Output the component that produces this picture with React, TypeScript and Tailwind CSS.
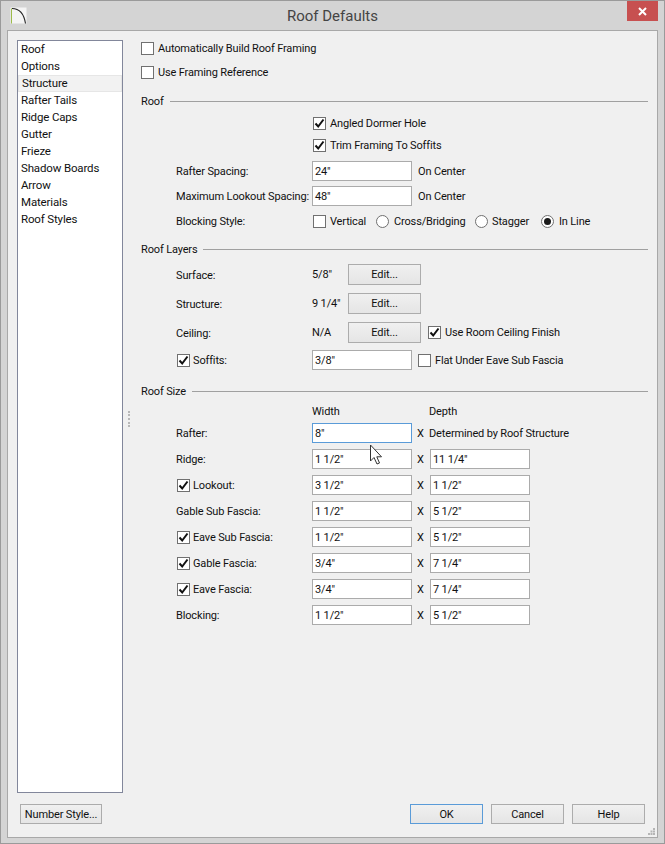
import type { ReactNode } from "react";

const menuItems = [
  "Roof",
  "Options",
  "Structure",
  "Rafter Tails",
  "Ridge Caps",
  "Gutter",
  "Frieze",
  "Shadow Boards",
  "Arrow",
  "Materials",
  "Roof Styles",
];

const sizeRows = [
  { label: "Ridge:", width: '1 1/2"', depth: '11 1/4"' },
  { label: "Lookout:", width: '3 1/2"', depth: '1 1/2"', check: true },
  { label: "Gable Sub Fascia:", width: '1 1/2"', depth: '5 1/2"' },
  { label: "Eave Sub Fascia:", width: '1 1/2"', depth: '5 1/2"', check: true },
  { label: "Gable Fascia:", width: '3/4"', depth: '7 1/4"', check: true },
  { label: "Eave Fascia:", width: '3/4"', depth: '7 1/4"', check: true },
  { label: "Blocking:", width: '1 1/2"', depth: '5 1/2"' },
];

const Checkbox = ({ checked = false, className = "" }: { checked?: boolean; className?: string }) => (
  <span
    className={`flex h-[13px] w-[13px] shrink-0 items-center justify-center border border-[#707070] bg-white ${className}`}
  >
    {checked && (
      <svg width="11" height="11" viewBox="0 0 11 11" fill="none">
        <path d="M1.5 5.5 L4.2 8.5 L9.5 1.5" stroke="#111" strokeWidth="2" />
      </svg>
    )}
  </span>
);

const Radio = ({ checked = false, className = "" }: { checked?: boolean; className?: string }) => (
  <span
    className={`flex h-[13px] w-[13px] shrink-0 items-center justify-center rounded-full border border-[#707070] bg-white ${className}`}
  >
    {checked && <span className="h-[7px] w-[7px] rounded-full bg-[#1a1a1a]" />}
  </span>
);

const Field = ({ value = "", focused = false }: { value?: string; focused?: boolean }) => (
  <div
    className={`flex h-[20px] w-[100px] shrink-0 items-center border bg-white pl-[2px] ${
      focused ? "border-[#5a9bd8]" : "border-[#ababab]"
    }`}
  >
    {value}
  </div>
);

const Button = ({ children, className = "" }: { children: ReactNode; className?: string }) => (
  <div
    className={`flex items-center justify-center whitespace-nowrap border bg-gradient-to-b from-[#f0f0f0] to-[#e5e5e5] ${className}`}
  >
    {children}
  </div>
);

const EditButton = () => <Button className="h-[21px] w-[73px] border-[#acacac]">Edit...</Button>;

const Heading = ({ title, className = "" }: { title: string; className?: string }) => (
  <div className={`flex h-[20px] items-center gap-[6px] ${className}`}>
    <span>{title}</span>
    <span className="h-px flex-1 bg-[#a0a0a0]" />
  </div>
);

const Row = ({ children, className = "" }: { children: ReactNode; className?: string }) => (
  <div className={`flex items-center whitespace-nowrap ${className}`}>{children}</div>
);

const Label = ({ children }: { children: ReactNode }) => (
  <span className="ml-[35px] w-[136px] shrink-0 pt-[1px]">{children}</span>
);

const CheckLabel = ({ children }: { children: ReactNode }) => (
  <span className="ml-[36px] flex w-[135px] shrink-0 items-center gap-[3px]">
    <Checkbox checked />
    {children}
  </span>
);

const Multiply = () => <span className="w-[18px] shrink-0 pl-[5px]">X</span>;

export default function App() {
  return (
    <div
      className="relative flex h-[844px] w-[665px] flex-col overflow-hidden border border-[#9a9a9a] bg-[#d4d4d4] text-[11px] leading-none tracking-[-0.15px] text-[#111]"
      style={{ fontFamily: "Roboto, sans-serif" }}
    >
      {/* title bar */}
      <div className="flex h-[29px] shrink-0 items-center justify-center pt-[1px] text-[15px] tracking-normal text-[#444]">
        Roof Defaults
      </div>
      <svg className="absolute left-[9px] top-[6px]" width="17" height="17" viewBox="0 0 17 17">
        <rect x="0.5" y="0.5" width="16" height="16" fill="#f4f4f4" />
        <path d="M1.5 1.5 V16.5" stroke="#9dbb4a" strokeWidth="1" fill="none" />
        <path d="M2 1.5 C9 1.5 14 7 15.5 16.5" stroke="#222" strokeWidth="1.1" fill="none" />
      </svg>
      <div className="absolute right-[6px] top-[0px] flex h-[20px] w-[31px] items-center justify-center bg-[#c75050]">
        <svg width="9" height="9" viewBox="0 0 9 9">
          <path d="M1 1 L8 8 M8 1 L1 8" stroke="#fff" strokeWidth="2" />
        </svg>
      </div>

      {/* panel */}
      <div className="mx-[6px] mb-[5px] flex flex-1 flex-col border border-[#a8a8a8] bg-[#f0f0f0] pl-[9px] pr-[9px] pt-[9px]">
        <div className="flex h-[753px] shrink-0">
          <div className="h-full w-[106px] shrink-0 border border-[#82879b] bg-white">
            {menuItems.map((item) => (
              <div
                key={item}
                className={`flex h-[17px] items-center pl-[3px] text-[11.5px] ${
                  item === "Structure" ? "border border-[#e6e6e6] bg-[#f2f2f2] pl-[2px]" : ""
                }`}
              >
                {item}
              </div>
            ))}
          </div>

          <div className="ml-[18px] flex-1">
            <Row className="h-[16px] gap-[4px]">
              <Checkbox />
              Automatically Build Roof Framing
            </Row>
            <Row className="mt-[6px] h-[20px] gap-[4px]">
              <Checkbox />
              Use Framing Reference
            </Row>

            <Heading title="Roof" className="mt-[9px]" />
            <Row className="mt-[2px] h-[20px] gap-[4px] pl-[172px]">
              <Checkbox checked />
              Angled Dormer Hole
            </Row>
            <Row className="mt-[2px] h-[20px] gap-[4px] pl-[172px]">
              <Checkbox checked />
              Trim Framing To Soffits
            </Row>
            <Row className="mt-[6px] h-[20px]">
              <Label>Rafter Spacing:</Label>
              <Field value={'24"'} />
              <span className="ml-[6px]">On Center</span>
            </Row>
            <Row className="mt-[5px] h-[20px]">
              <Label>Maximum Lookout Spacing:</Label>
              <Field value={'48"'} />
              <span className="ml-[6px]">On Center</span>
            </Row>
            <Row className="mt-[5px] h-[20px]">
              <Label>Blocking Style:</Label>
              <Checkbox className="ml-[1px]" />
              <span className="w-[50px] shrink-0 pl-[4px]">Vertical</span>
              <Radio />
              <span className="w-[86px] shrink-0 pl-[5px]">Cross/Bridging</span>
              <Radio />
              <span className="w-[53px] shrink-0 pl-[4px]">Stagger</span>
              <Radio checked />
              <span className="ml-[5px]">In Line</span>
            </Row>

            <Heading title="Roof Layers" className="mt-[8px]" />
            <Row className="mt-[5px] h-[21px]">
              <Label>Surface:</Label>
              <span className="w-[36px] shrink-0">5/8"</span>
              <EditButton />
            </Row>
            <Row className="mt-[8px] h-[21px]">
              <Label>Structure:</Label>
              <span className="w-[36px] shrink-0">9 1/4"</span>
              <EditButton />
            </Row>
            <Row className="mt-[8px] h-[21px]">
              <Label>Ceiling:</Label>
              <span className="w-[36px] shrink-0">N/A</span>
              <EditButton />
              <Checkbox checked className="ml-[7px]" />
              <span className="ml-[4px]">Use Room Ceiling Finish</span>
            </Row>
            <Row className="mt-[7px] h-[20px]">
              <CheckLabel>Soffits:</CheckLabel>
              <Field value={'3/8"'} />
              <Checkbox className="ml-[6px]" />
              <span className="ml-[4px]">Flat Under Eave Sub Fascia</span>
            </Row>

            <Heading title="Roof Size" className="mt-[11px]" />
            <Row className="h-[20px]">
              <span className="ml-[171px] w-[117px]">Width</span>
              <span>Depth</span>
            </Row>
            <Row className="mt-[2px] h-[20px]">
              <Label>Rafter:</Label>
              <Field value={'8"'} focused />
              <Multiply />
              <span className="-ml-px">Determined by Roof Structure</span>
            </Row>
            {sizeRows.map((row) => (
              <Row key={row.label} className="mt-[6px] h-[20px]">
                {row.check ? <CheckLabel>{row.label}</CheckLabel> : <Label>{row.label}</Label>}
                <Field value={row.width} />
                <Multiply />
                <Field value={row.depth} />
              </Row>
            ))}
          </div>
        </div>

        {/* footer */}
        <div className="mt-[11px] flex h-[20px] shrink-0 items-stretch pl-[3px] pr-[3px]">
          <Button className="w-[82px] border-[#acacac]">Number Style...</Button>
          <Button className="ml-auto w-[73px] border-[#5a9bd8]">OK</Button>
          <Button className="ml-[8px] w-[73px] border-[#acacac]">Cancel</Button>
          <Button className="ml-[8px] w-[73px] border-[#acacac]">Help</Button>
        </div>
      </div>

      {/* sash grip between list and form */}
      <div className="absolute left-[127px] top-[410px] h-[16px] w-[2px] border-l-2 border-dotted border-[#b8b8b8]" />

      {/* mouse pointer over the rafter field */}
      <svg className="absolute left-[368px] top-[443px]" width="15" height="22" viewBox="0 0 15 22">
        <path
          d="M1.5 1 V17 L5 13.5 L8 20 L10.5 19 L7.8 12.8 H12.5 Z"
          fill="#fff"
          stroke="#333"
          strokeWidth="1"
        />
      </svg>

      {/* resize grip */}
      <svg className="absolute left-[647px] top-[827px]" width="8" height="8" viewBox="0 0 8 8" fill="#b5b5b5">
        <rect x="5" y="0" width="2" height="2" />
        <rect x="2.5" y="2.5" width="2" height="2" />
        <rect x="5" y="2.5" width="2" height="2" />
        <rect x="0" y="5" width="2" height="2" />
        <rect x="2.5" y="5" width="2" height="2" />
        <rect x="5" y="5" width="2" height="2" />
      </svg>
    </div>
  );
}
